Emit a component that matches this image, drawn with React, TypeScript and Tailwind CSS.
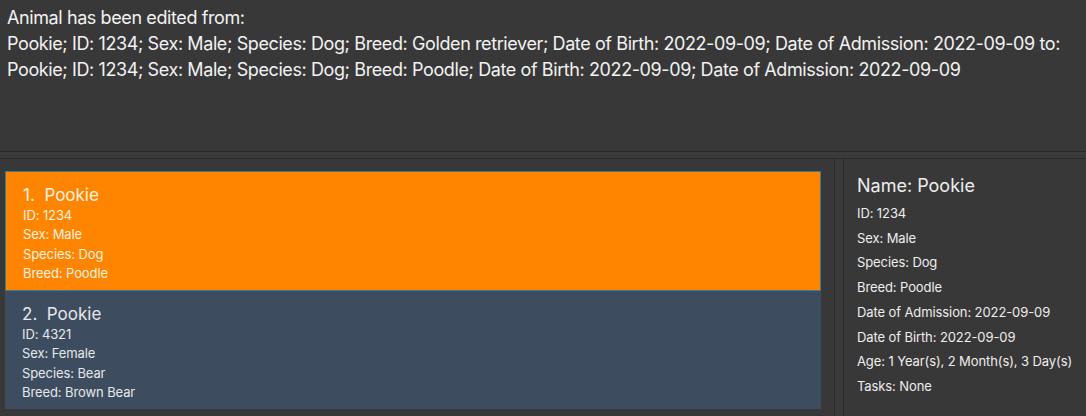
import React from "react";

const font = { fontFamily: "Inter, 'Open Sans', sans-serif" };

function Card({ idx, name, id, sex, species, breed, selected }: { idx: number; name: string; id: string; sex: string; species: string; breed: string; selected?: boolean }) {
  return (
    <div
      className={
        selected
          ? "h-[120px] bg-[#ff8400] border border-[#3a7d8f] pl-[17px] pt-[12px] text-[#fff3e0]"
          : "h-[118px] bg-[#3d4c5f] pl-[17px] pt-[12px] text-[#e6e8ea]"
      }
    >
      <div className="text-[17px] leading-[22px]">{idx}.&nbsp; {name}</div>
      <div className="text-[13px] leading-[19.3px] tracking-[-0.1px]">
        <div>ID: {id}</div>
        <div>Sex: {sex}</div>
        <div>Species: {species}</div>
        <div>Breed: {breed}</div>
      </div>
    </div>
  );
}

export default function App() {
  return (
    <div className="w-[1086px] h-[416px] bg-[#383838] flex flex-col overflow-hidden" style={font}>
      <div className="h-[151px] shrink-0 px-[7px] pt-[5px] text-[18px] leading-[26px] text-[#f2f2f2] tracking-[-0.4px] whitespace-nowrap">
        <div>Animal has been edited from:</div>
        <div>Pookie; ID: 1234; Sex: Male; Species: Dog; Breed: Golden retriever; Date of Birth: 2022-09-09; Date of Admission: 2022-09-09 to:</div>
        <div>Pookie; ID: 1234; Sex: Male; Species: Dog; Breed: Poodle; Date of Birth: 2022-09-09; Date of Admission: 2022-09-09</div>
      </div>
      <div className="h-[8px] shrink-0 border-t border-b border-[#2a2a2a] bg-[#3a3a3a]" />
      <div className="flex flex-1 min-h-0">
        <div className="w-[834px] shrink-0 pt-[12px] pl-[5px] pr-[13px]">
          <Card idx={1} name="Pookie" id="1234" sex="Male" species="Dog" breed="Poodle" selected />
          <Card idx={2} name="Pookie" id="4321" sex="Female" species="Bear" breed="Brown Bear" />
        </div>
        <div className="w-[10px] shrink-0 border-l border-r border-[#2a2a2a] bg-[#3a3a3a]" />
        <div className="flex-1 pl-[13px] pt-[15px] text-[#eeeeee] whitespace-nowrap">
          <div className="text-[18px] leading-[24px] mb-[3px]">Name: Pookie</div>
          <div className="text-[13px] leading-[24.7px] tracking-[-0.1px]">
            <div>ID: 1234</div>
            <div>Sex: Male</div>
            <div>Species: Dog</div>
            <div>Breed: Poodle</div>
            <div>Date of Admission: 2022-09-09</div>
            <div>Date of Birth: 2022-09-09</div>
            <div>Age: 1 Year(s), 2 Month(s), 3 Day(s)</div>
            <div>Tasks: None</div>
          </div>
        </div>
      </div>
    </div>
  );
}
